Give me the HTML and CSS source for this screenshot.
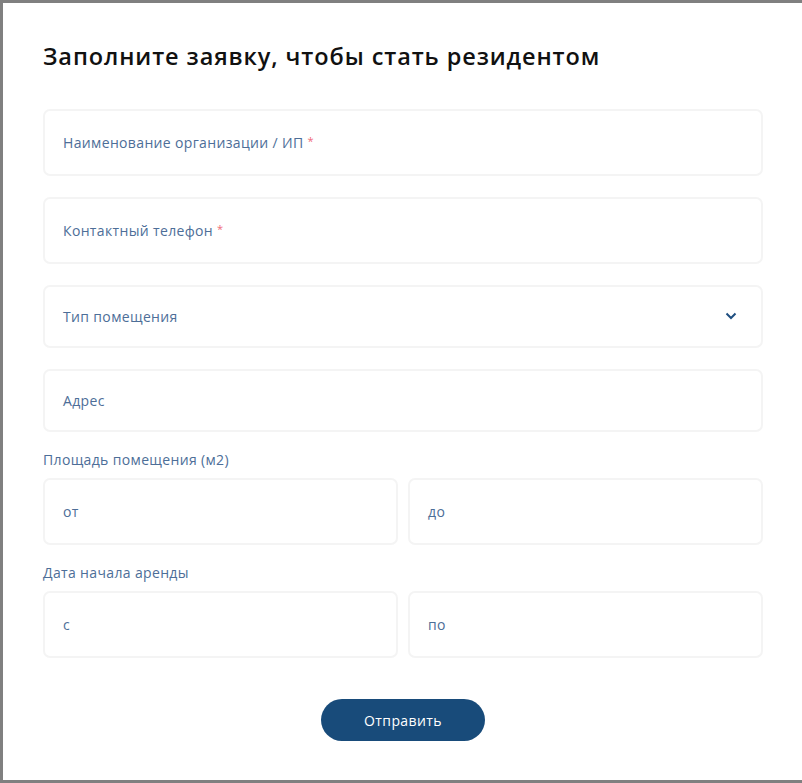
FILE: index.html
```html
<!DOCTYPE html>
<html lang="ru">
<head>
<meta charset="utf-8">
<title>Заявка</title>
<link rel="stylesheet" href="styles.css">
</head>
<body>
<div class="modal">
  <h1 class="title">Заполните заявку, чтобы стать резидентом</h1>
  <form class="form">
    <div class="field">Наименование организации / ИП <span class="req">*</span></div>
    <div class="field">Контактный телефон <span class="req">*</span></div>
    <div class="field field--short field--select">
      <span>Тип помещения</span>
      <svg class="chevron" width="12" height="8" viewBox="0 0 12 8"><path d="M1.5 1.5 L6 6 L10.5 1.5" fill="none" stroke="#1f4f80" stroke-width="2"/></svg>
    </div>
    <div class="field field--short">Адрес</div>
    <div class="group-label">Площадь помещения (м2)</div>
    <div class="row">
      <div class="field">от</div>
      <div class="field">до</div>
    </div>
    <div class="group-label">Дата начала аренды</div>
    <div class="row">
      <div class="field">с</div>
      <div class="field">по</div>
    </div>
    <div class="actions">
      <button type="button" class="btn">Отправить</button>
    </div>
  </form>
</div>
</body>
</html>
```
FILE: styles.css
```css
html, body {
  margin: 0;
  padding: 0;
  background: #808080;
  height: 783px;
  overflow: hidden;
}
.modal {
  margin: 3px 0 0 3px;
  height: 777px;
  background: #fff;
  box-sizing: border-box;
  padding: 38px 39px 0 40px;
  font-family: "Open Sans", "Noto Sans", sans-serif;
}
.title {
  margin: 0 0 38px 0;
  font-size: 23.5px;
  line-height: 30px;
  font-weight: 600;
  letter-spacing: 0.9px;
  color: #111;
}
.form {
  display: flex;
  flex-direction: column;
}
.field {
  box-sizing: border-box;
  height: 67px;
  border: 2px solid #f4f4f4;
  border-radius: 7px;
  padding: 0 18px 1px;
  display: flex;
  align-items: center;
  font-size: 14px;
  letter-spacing: 0.35px;
  color: #4d6e98;
  margin-bottom: 21px;
}
.field--short {
  height: 63px;
}
.field--select {
  justify-content: space-between;
  padding-right: 24px;
}
.req {
  color: #f06a78;
  margin-left: 4px;
  font-size: 11px;
  align-self: flex-start;
  margin-top: 22px;
}
.group-label {
  margin-top: -3px;
  font-size: 14px;
  line-height: 20px;
  letter-spacing: 0.35px;
  color: #4d6e98;
  margin-bottom: 8px;
}
.row {
  display: grid;
  grid-template-columns: 1fr 1fr;
  gap: 10px;
}
.row .field {
  margin-bottom: 21px;
}
.actions {
  display: flex;
  justify-content: center;
  margin-top: 20px;
}
.btn {
  width: 164px;
  height: 42px;
  border: none;
  border-radius: 21px;
  background: #184b7a;
  color: #fff;
  font-family: inherit;
  font-size: 14px;
  letter-spacing: 0.4px;
}
```
